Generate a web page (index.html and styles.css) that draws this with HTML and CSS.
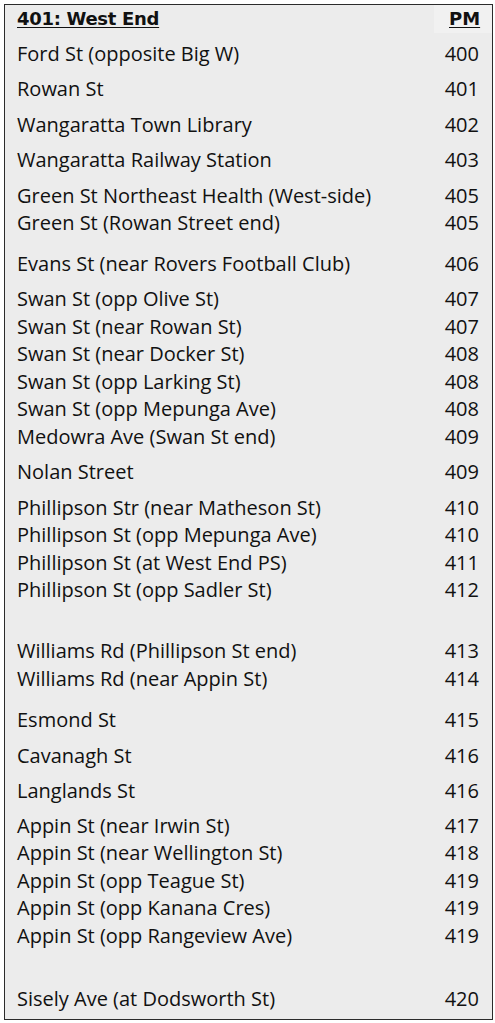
FILE: index.html
```html
<!DOCTYPE html>
<html lang="en">
<head>
<meta charset="utf-8">
<title>401: West End</title>
<link rel="stylesheet" href="styles.css">
</head>
<body>
<div class="sheet">
  <div class="row head"><span class="name">401: West End</span><span class="pm">PM</span></div>
  <div class="row sp first"><span class="name">Ford St (opposite Big W)</span><span class="num">400</span></div>
  <div class="row sp"><span class="name">Rowan St</span><span class="num">401</span></div>
  <div class="row sp"><span class="name">Wangaratta Town Library</span><span class="num">402</span></div>
  <div class="row sp"><span class="name">Wangaratta Railway Station</span><span class="num">403</span></div>
  <div class="row sp"><span class="name">Green St Northeast Health (West-side)</span><span class="num">405</span></div>
  <div class="row"><span class="name">Green St (Rowan Street end)</span><span class="num">405</span></div>
  <div class="row sp2"><span class="name">Evans St (near Rovers Football Club)</span><span class="num">406</span></div>
  <div class="row sp"><span class="name">Swan St (opp Olive St)</span><span class="num">407</span></div>
  <div class="row"><span class="name">Swan St (near Rowan St)</span><span class="num">407</span></div>
  <div class="row"><span class="name">Swan St (near Docker St)</span><span class="num">408</span></div>
  <div class="row"><span class="name">Swan St (opp Larking St)</span><span class="num">408</span></div>
  <div class="row"><span class="name">Swan St (opp Mepunga Ave)</span><span class="num">408</span></div>
  <div class="row"><span class="name">Medowra Ave (Swan St end)</span><span class="num">409</span></div>
  <div class="row sp"><span class="name">Nolan Street</span><span class="num">409</span></div>
  <div class="row sp"><span class="name">Phillipson Str (near Matheson St)</span><span class="num">410</span></div>
  <div class="row"><span class="name">Phillipson St (opp Mepunga Ave)</span><span class="num">410</span></div>
  <div class="row"><span class="name">Phillipson St (at West End PS)</span><span class="num">411</span></div>
  <div class="row"><span class="name">Phillipson St (opp Sadler St)</span><span class="num">412</span></div>
  <div class="row sp3"><span class="name">Williams Rd (Phillipson St end)</span><span class="num">413</span></div>
  <div class="row"><span class="name">Williams Rd (near Appin St)</span><span class="num">414</span></div>
  <div class="row sp2b"><span class="name">Esmond St</span><span class="num">415</span></div>
  <div class="row sp"><span class="name">Cavanagh St</span><span class="num">416</span></div>
  <div class="row sp"><span class="name">Langlands St</span><span class="num">416</span></div>
  <div class="row sp1"><span class="name">Appin St (near Irwin St)</span><span class="num">417</span></div>
  <div class="row"><span class="name">Appin St (near Wellington St)</span><span class="num">418</span></div>
  <div class="row"><span class="name">Appin St (opp Teague St)</span><span class="num">419</span></div>
  <div class="row"><span class="name">Appin St (opp Kanana Cres)</span><span class="num">419</span></div>
  <div class="row"><span class="name">Appin St (opp Rangeview Ave)</span><span class="num">419</span></div>
  <div class="row sp4"><span class="name">Sisely Ave (at Dodsworth St)</span><span class="num">420</span></div>
</div>
</body>
</html>
```

FILE: styles.css
```css
html, body {
  margin: 0;
  padding: 0;
  background: #ffffff;
}

body {
  padding: 4px 0 0 4px;
}

.sheet {
  width: 487px;
  height: 1014px;
  border: 1.5px solid #2b2b2b;
  background: #ececec;
  font-family: "Open Sans", "Liberation Sans", sans-serif;
  font-size: 20px;
  font-weight: 500;
  color: #111111;
  box-sizing: content-box;
}

.row {
  display: flex;
  justify-content: space-between;
  align-items: center;
  height: 27.5px;
  line-height: 27.5px;
  padding: 0 13px 0 12px;
  white-space: nowrap;
}

.row.head {
  height: 28px;
  line-height: 28px;
  padding-right: 0;
}

.head .name {
  font-family: "DejaVu Sans", sans-serif;
  font-weight: bold;
  font-size: 18px;
  text-decoration: underline;
  text-underline-offset: 2px;
  letter-spacing: -0.3px;
}

.head .pm {
  align-self: stretch;
  width: 58px;
  box-sizing: border-box;
  padding-left: 15px;
  background: #f1f1f1;
  font-family: "DejaVu Sans", sans-serif;
  font-weight: bold;
  font-size: 18px;
  text-decoration: underline;
  text-underline-offset: 2px;
}

.row.sp { margin-top: 8px; }
.row.first { margin-top: 6.5px; }
.row.sp1 { margin-top: 7px; }
.row.sp2 { margin-top: 13px; }
.row.sp2b { margin-top: 14px; }
.row.sp3 { margin-top: 33.5px; }
.row.sp4 { margin-top: 36px; }
```
